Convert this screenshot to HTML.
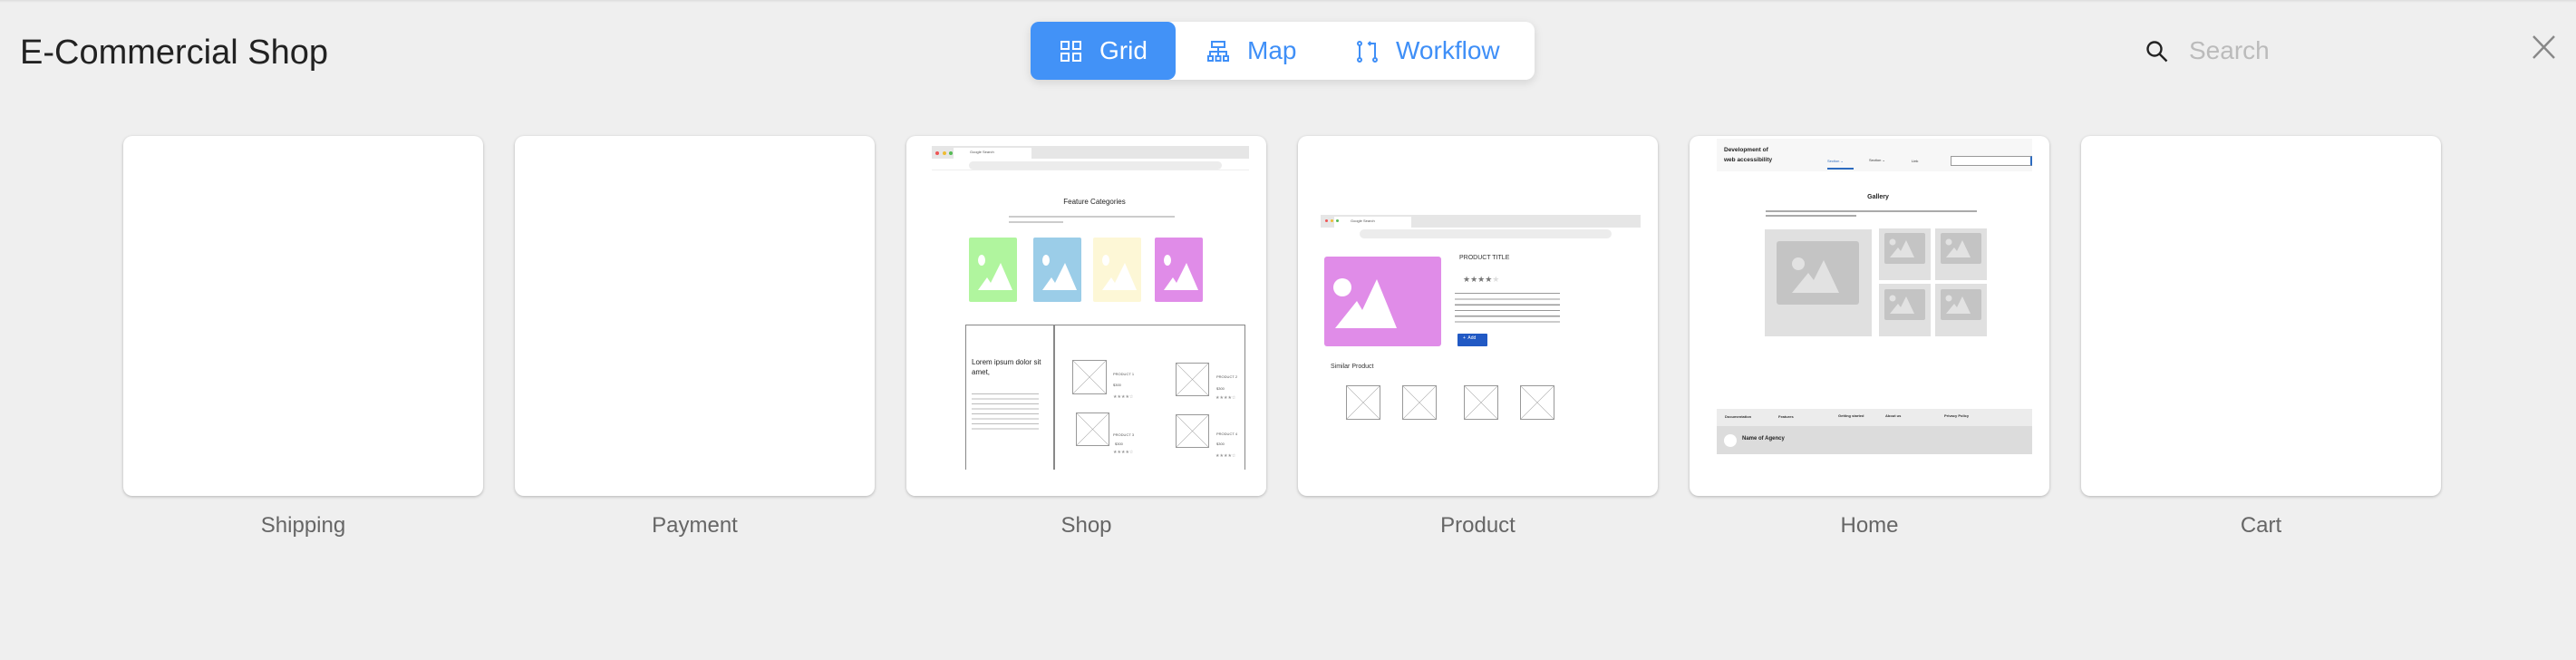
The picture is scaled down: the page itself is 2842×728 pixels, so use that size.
<!DOCTYPE html>
<html><head><meta charset="utf-8"><style>
*{margin:0;padding:0;box-sizing:border-box}
body{width:2842px;height:728px;background:#efefef;font-family:"Liberation Sans",Arial,sans-serif;position:relative;overflow:hidden}
.abs{position:absolute}
.topline{position:absolute;left:0;top:0;width:2842px;height:3px;background:linear-gradient(#ddd,#efefef)}
.title{position:absolute;left:22px;top:37px;font-size:38px;color:#222;white-space:nowrap}
.seg{position:absolute;left:1137px;top:24px;width:556px;height:64px;background:#fff;border-radius:10px;box-shadow:0 3px 10px rgba(0,0,0,.12)}
.seg .act{position:absolute;left:0;top:0;width:160px;height:64px;background:#4292f7;border-radius:9px}
.seg .t{position:absolute;top:16px;font-size:28px;color:#3f8ff7;white-space:nowrap}
.card{position:absolute;top:150px;width:397px;height:397px;background:#fff;border-radius:10px;box-shadow:0 1px 3px rgba(0,0,0,.25);overflow:hidden}
.lbl{position:absolute;top:566px;width:397px;text-align:center;font-size:24px;color:#666}
.card *{position:absolute}
.tx{font-size:3px;line-height:3.5px;color:#555}
.xb{border:1px solid #999;background:linear-gradient(to top right,transparent 49%,#aaa 50%,transparent 51%),linear-gradient(to bottom right,transparent 49%,#aaa 50%,transparent 51%)}
</style></head><body>
<div class="topline"></div>
<div class="title">E-Commercial Shop</div>

<div class="seg">
 <div class="act"></div>
 <svg class="abs" style="left:33px;top:21px" width="24" height="24" viewBox="0 0 24 24" fill="none" stroke="#fff" stroke-width="2"><rect x="1" y="1" width="8" height="8"/><rect x="14" y="1" width="8" height="8"/><rect x="1" y="14" width="8" height="8"/><rect x="14" y="14" width="8" height="8"/></svg>
 <div class="t" style="left:76px;color:#fff">Grid</div>
 <svg class="abs" style="left:195px;top:21px" width="24" height="24" viewBox="0 0 24 24" fill="none" stroke="#3f8ff7" stroke-width="2"><rect x="5" y="1" width="14" height="6"/><path d="M12 7v5M3 17v-5h18v5M12 12v5"/><rect x="1" y="17" width="5" height="5"/><rect x="9.5" y="17" width="5" height="5"/><rect x="18" y="17" width="5" height="5"/></svg>
 <div class="t" style="left:239px">Map</div>
 <svg class="abs" style="left:360px;top:21px" width="24" height="24" viewBox="0 0 24 24" fill="none" stroke="#3f8ff7" stroke-width="2"><circle cx="3" cy="3" r="2"/><circle cx="3" cy="21" r="2"/><circle cx="20" cy="21" r="2"/><path d="M3 5v14M20 19V3h-7M15 1l-2 2 2 2"/></svg>
 <div class="t" style="left:403px">Workflow</div>
</div>

<svg class="abs" style="left:2367px;top:44px" width="26" height="26" viewBox="0 0 26 26" fill="none" stroke="#222" stroke-width="2.4"><circle cx="10" cy="10" r="7.5"/><path d="M15.5 15.5l8 8"/></svg>
<div class="abs" style="left:2415px;top:40px;font-size:28px;color:#bbb">Search</div>
<svg class="abs" style="left:2794px;top:39px" width="25" height="26" viewBox="0 0 25 26" stroke="#888" stroke-width="2.4"><path d="M1 1l23 24M24 1L1 25"/></svg>

<div class="card" style="left:136px"></div><div class="lbl" style="left:136px">Shipping</div>
<div class="card" style="left:568px"></div><div class="lbl" style="left:568px">Payment</div>

<div class="card" style="left:1000px">
 <div style="left:28px;top:11px;width:350px;height:14px;background:#e6e6e6"></div>
 <div style="left:52px;top:13px;width:86px;height:12px;background:#fff"></div>
 <div style="left:32px;top:17px;width:4px;height:4px;border-radius:50%;background:#e55"></div>
 <div style="left:40px;top:17px;width:4px;height:4px;border-radius:50%;background:#eb3"></div>
 <div style="left:47px;top:17px;width:4px;height:4px;border-radius:50%;background:#5b5"></div>
 <div class="tx" style="left:70px;top:16px;font-size:4px">Google Search</div>
 <div style="left:69px;top:28px;width:279px;height:9px;border-radius:5px;background:#ececec"></div>
 <div style="left:28px;top:25px;width:350px;height:13px;border-bottom:1px solid #eee"></div>
 <div style="left:0;top:68px;width:397px;text-align:center;font-size:8px;color:#222;padding-left:18px">Feature Categories</div>
 <div style="left:113px;top:88px;width:183px;height:2px;background:#ccc"></div>
 <div style="left:113px;top:94px;width:60px;height:2px;background:#ccc"></div>
 <div style="left:69px;top:112px;width:53px;height:71px;background:#b0f59e;border-radius:2px"></div>
 <div style="left:140px;top:112px;width:53px;height:71px;background:#9bcde8;border-radius:2px"></div>
 <div style="left:206px;top:112px;width:53px;height:71px;background:#fdf7d6;border-radius:2px"></div>
 <div style="left:274px;top:112px;width:53px;height:71px;background:#e08ce8;border-radius:2px"></div>
 <svg style="left:69px;top:112px" width="258" height="71" viewBox="0 0 258 71" fill="#fff"><g id="m"><ellipse cx="14" cy="25" rx="4" ry="6"/><path d="M10 58l10-14 4 6 11-22 13 30z"/></g><use href="#m" x="71"/><use href="#m" x="137"/><use href="#m" x="205"/></svg>
 <div style="left:65px;top:208px;width:309px;height:160px;border:1.5px solid #888;border-bottom:none"></div>
 <div style="left:162px;top:208px;width:1.5px;height:160px;background:#888"></div>
 <div style="left:0;top:368px;width:397px;height:30px;background:#fff"></div>
 <div style="left:72px;top:244px;font-size:8px;line-height:11px;color:#222;width:85px">Lorem ipsum dolor sit amet,</div>
 <div style="left:72px;top:284px;width:74px;height:44px;background:repeating-linear-gradient(#bbb 0 1.2px,transparent 1.2px 5.5px)"></div>
 <div class="xb" style="left:183px;top:247px;width:38px;height:38px"></div>
 <div class="xb" style="left:297px;top:250px;width:37px;height:37px"></div>
 <div class="xb" style="left:187px;top:305px;width:37px;height:37px"></div>
 <div class="xb" style="left:297px;top:307px;width:37px;height:37px"></div>
 <div class="tx" style="left:228px;top:261px;font-size:4px">PRODUCT 1</div><div class="tx" style="left:228px;top:273px;font-size:4px">$300</div><div class="tx" style="left:228px;top:287px;font-size:5px;color:#999">★★★★☆</div>
 <div class="tx" style="left:342px;top:264px;font-size:4px">PRODUCT 2</div><div class="tx" style="left:342px;top:277px;font-size:4px">$300</div><div class="tx" style="left:341px;top:288px;font-size:5px;color:#999">★★★★☆</div>
 <div class="tx" style="left:228px;top:328px;font-size:4px">PRODUCT 3</div><div class="tx" style="left:230px;top:338px;font-size:4px">$300</div><div class="tx" style="left:228px;top:348px;font-size:5px;color:#999">★★★★☆</div>
 <div class="tx" style="left:342px;top:327px;font-size:4px">PRODUCT 4</div><div class="tx" style="left:342px;top:338px;font-size:4px">$300</div><div class="tx" style="left:341px;top:352px;font-size:5px;color:#999">★★★★☆</div>
</div><div class="lbl" style="left:1000px">Shop</div>

<div class="card" style="left:1432px">
 <div style="left:25px;top:87px;width:353px;height:14px;background:#e6e6e6"></div>
 <div style="left:40px;top:89px;width:85px;height:12px;background:#fff"></div>
 <div style="left:30px;top:92px;width:3px;height:3px;border-radius:50%;background:#e55"></div>
 <div style="left:36px;top:92px;width:3px;height:3px;border-radius:50%;background:#eb3"></div>
 <div style="left:42px;top:92px;width:3px;height:3px;border-radius:50%;background:#5b5"></div>
 <div class="tx" style="left:58px;top:92px;font-size:4px">Google Search</div>
 <div style="left:68px;top:103px;width:278px;height:10px;border-radius:5px;background:#ececec"></div>
 <div style="left:29px;top:133px;width:129px;height:99px;background:#e08ce8;border-radius:3px"></div>
 <svg style="left:29px;top:133px" width="129" height="99" viewBox="0 0 129 99" fill="#fff"><ellipse cx="20" cy="34" rx="10" ry="10"/><path d="M12 79l24-30 6 10 16-34 22 54z"/></svg>
 <div class="tx" style="left:178px;top:133px;font-size:7px;color:#333">PRODUCT TITLE</div>
 <div class="tx" style="left:182px;top:153px;font-size:9px;line-height:10px;color:#777">★★★★<span style="color:#ddd">★</span></div>
 <div style="left:173px;top:173px;width:116px;height:37px;background:repeating-linear-gradient(#999 0 1.2px,transparent 1.2px 6.3px)"></div>
 <div style="left:176px;top:218px;width:33px;height:14px;background:#2159c4;border-radius:1px"></div>
 <div class="tx" style="left:182px;top:222px;font-size:5px;color:#fff">+&nbsp; Add</div>
 <div class="tx" style="left:36px;top:253px;font-size:7px;color:#333">Similar Product</div>
 <div class="xb" style="left:53px;top:275px;width:38px;height:38px"></div>
 <div class="xb" style="left:115px;top:275px;width:38px;height:38px"></div>
 <div class="xb" style="left:183px;top:275px;width:38px;height:38px"></div>
 <div class="xb" style="left:245px;top:275px;width:38px;height:38px"></div>
</div><div class="lbl" style="left:1432px">Product</div>

<div class="card" style="left:1864px">
 <div style="left:30px;top:3px;width:348px;height:36px;background:#f7f7f7"></div>
 <div style="left:38px;top:10px;font-size:6.5px;line-height:11px;font-weight:bold;color:#222">Development of<br>web accessibility</div>
 <div class="tx" style="left:152px;top:26px;font-size:4px;color:#2c6bc0">Section ⌄</div>
 <div style="left:152px;top:35px;width:29px;height:1.5px;background:#2c6bc0"></div>
 <div class="tx" style="left:198px;top:25px;font-size:4px;color:#333">Section ⌄</div>
 <div class="tx" style="left:245px;top:26px;font-size:4px;color:#333">Link</div>
 <div style="left:288px;top:22px;width:90px;height:11px;border:1px solid #999;border-right:2px solid #2c6bc0;background:#fff"></div>
 <div style="left:0;top:64px;width:397px;text-align:center;font-size:7px;font-weight:bold;color:#222;padding-left:19px">Gallery</div>
 <div style="left:84px;top:82px;width:233px;height:1.5px;background:#aaa"></div>
 <div style="left:84px;top:87px;width:100px;height:1.5px;background:#aaa"></div>
 <div style="left:83px;top:103px;width:118px;height:118px;background:#e0e0e0"></div>
 <div style="left:96px;top:116px;width:91px;height:70px;background:#c4c4c4;border-radius:3px"></div>
 <svg style="left:96px;top:116px" width="91" height="70" viewBox="0 0 91 70" fill="#e2e2e2"><circle cx="24" cy="25" r="7"/><path d="M17 57l18-22 6 8 11-22 17 36z"/></svg>
 <div style="left:209px;top:102px;width:57px;height:57px;background:#e0e0e0"></div>
 <div style="left:271px;top:102px;width:57px;height:57px;background:#e0e0e0"></div>
 <div style="left:209px;top:163px;width:57px;height:58px;background:#e0e0e0"></div>
 <div style="left:271px;top:163px;width:57px;height:58px;background:#e0e0e0"></div>
 <svg style="left:209px;top:102px" width="119" height="119" viewBox="0 0 119 119"><g id="s"><rect x="6" y="5" width="45" height="34" rx="2" fill="#c4c4c4"/><circle cx="15" cy="15" r="3.5" fill="#e2e2e2"/><path d="M12 32l9-11 3 4 6-12 9 19z" fill="#e2e2e2"/></g><use href="#s" x="62"/><use href="#s" y="62"/><use href="#s" x="62" y="62"/></svg>
 <div style="left:30px;top:301px;width:348px;height:19px;background:#ececec"></div>
 <div class="tx" style="left:39px;top:308px;font-size:4px;font-weight:bold;color:#333">Documentation</div>
 <div class="tx" style="left:98px;top:308px;font-size:4px;font-weight:bold;color:#333">Features</div>
 <div class="tx" style="left:164px;top:307px;font-size:4px;font-weight:bold;color:#333">Getting started</div>
 <div class="tx" style="left:216px;top:307px;font-size:4px;font-weight:bold;color:#333">About us</div>
 <div class="tx" style="left:281px;top:307px;font-size:4px;font-weight:bold;color:#333">Privacy Policy</div>
 <div style="left:30px;top:320px;width:348px;height:31px;background:#dcdcdc"></div>
 <div style="left:38px;top:329px;width:14px;height:14px;border-radius:50%;background:#fff"></div>
 <div style="left:58px;top:331px;font-size:6px;font-weight:bold;color:#222">Name of Agency</div>
</div><div class="lbl" style="left:1864px">Home</div>

<div class="card" style="left:2296px"></div><div class="lbl" style="left:2296px">Cart</div>
</body></html>
